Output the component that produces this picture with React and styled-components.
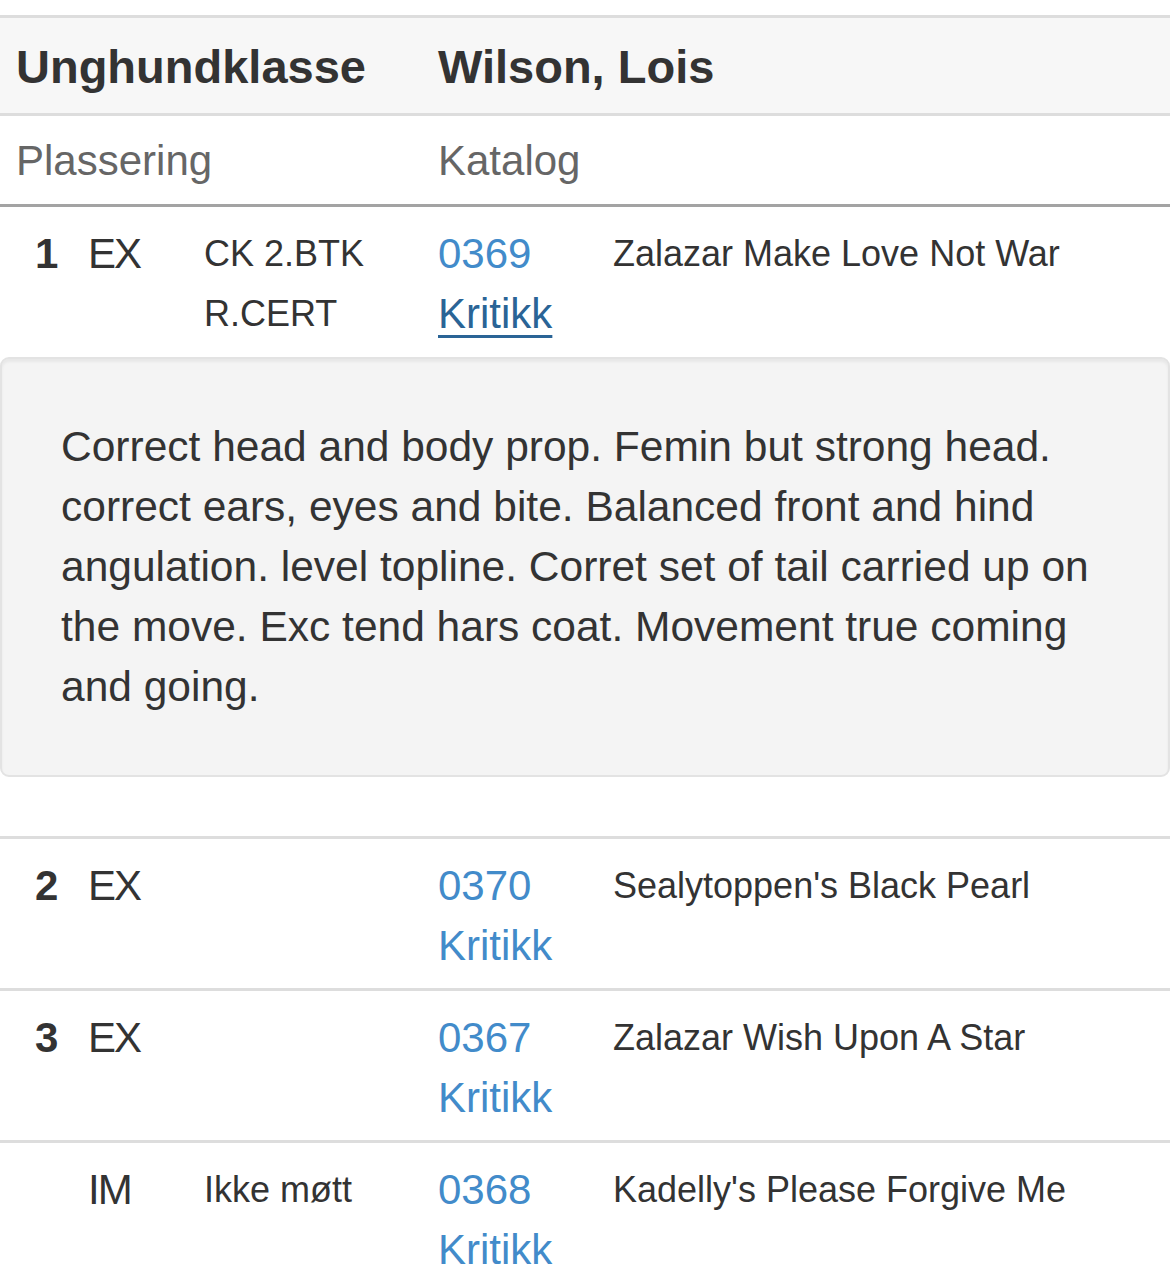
import React from "react";
import styled, { createGlobalStyle } from "styled-components";

const GlobalStyle = createGlobalStyle`
  html, body {
    margin: 0;
    padding: 0;
    background: #ffffff;
  }
  body {
    font-family: "Liberation Sans", Arial, Helvetica, sans-serif;
    color: #333333;
  }
`;

const Page = styled.div`
  padding-top: 15px;
  width: 1170px;
`;

const ClassHeader = styled.div`
  display: grid;
  grid-template-columns: 422px 1fr;
  padding: 19px 0 16px 16px;
  background: #f7f7f7;
  border-top: 3px solid #dddddd;
  border-bottom: 3px solid #dddddd;
  font-size: 47px;
  font-weight: 700;
  line-height: 60px;
  color: #333333;
`;

const ColumnHeader = styled.div`
  display: grid;
  grid-template-columns: 422px 1fr;
  padding: 15px 0 13px 16px;
  border-bottom: 3px solid #a3a3a3;
  font-size: 42px;
  line-height: 60px;
  color: #666666;
`;

const Row = styled.div`
  display: grid;
  grid-template-columns: 53px 116px 234px 175px 1fr;
  padding: 17px 0 ${(p) => p.$bottom || 12}px 35px;
  border-top: ${(p) => (p.$first ? "none" : "3px solid #dddddd")};
  line-height: 60px;
`;

const Place = styled.div`
  font-size: 42px;
  font-weight: 700;
`;

const Grade = styled.div`
  font-size: 42px;
  letter-spacing: -2px;
`;

const Award = styled.div`
  font-size: 36px;
`;

const Catalog = styled.div`
  display: flex;
  flex-direction: column;
  font-size: 42px;
`;

const Link = styled.a`
  color: ${(p) => (p.$active ? "#2a6496" : "#428bca")};
  text-decoration: ${(p) => (p.$active ? "underline" : "none")};
  text-decoration-thickness: 3px;
  text-underline-offset: 7px;
  cursor: pointer;
`;

const Name = styled.div`
  font-size: 36px;
`;

const DetailsRow = styled.div`
  padding: 2px 0 59px;
`;

const Well = styled.div`
  background: #f4f4f4;
  border: 2px solid #e3e3e3;
  border-radius: 9px;
  box-shadow: inset 0 3px 3px rgba(0, 0, 0, 0.05);
  padding: 58px 60px 58px 59px;
  font-size: 42.5px;
  line-height: 60px;
  color: #333333;
`;

const results = [
  {
    place: "1",
    grade: "EX",
    award: ["CK 2.BTK", "R.CERT"],
    catalog: "0369",
    name: "Zalazar Make Love Not War",
    open: true,
    critique:
      "Correct head and body prop. Femin but strong head. correct ears, eyes and bite. Balanced front and hind angulation. level topline. Corret set of tail carried up on the move. Exc tend hars coat. Movement true coming and going.",
  },
  { place: "2", grade: "EX", award: [], catalog: "0370", name: "Sealytoppen's Black Pearl" },
  { place: "3", grade: "EX", award: [], catalog: "0367", name: "Zalazar Wish Upon A Star" },
  { place: "", grade: "IM", award: ["Ikke møtt"], catalog: "0368", name: "Kadelly's Please Forgive Me" },
];

export default function App() {
  return (
    <Page>
      <GlobalStyle />
      <ClassHeader>
        <div>Unghundklasse</div>
        <div>Wilson, Lois</div>
      </ClassHeader>
      <ColumnHeader>
        <div>Plassering</div>
        <div>Katalog</div>
      </ColumnHeader>
      {results.map((r, i) => (
        <React.Fragment key={r.catalog}>
          <Row $first={i === 0} $bottom={i === 0 ? 11 : 12}>
            <Place>{r.place}</Place>
            <Grade>{r.grade}</Grade>
            <Award>
              {r.award.map((a) => (
                <div key={a}>{a}</div>
              ))}
            </Award>
            <Catalog>
              <Link>{r.catalog}</Link>
              <Link $active={r.open}>Kritikk</Link>
            </Catalog>
            <Name>{r.name}</Name>
          </Row>
          {r.open && (
            <DetailsRow>
              <Well>{r.critique}</Well>
            </DetailsRow>
          )}
        </React.Fragment>
      ))}
    </Page>
  );
}
